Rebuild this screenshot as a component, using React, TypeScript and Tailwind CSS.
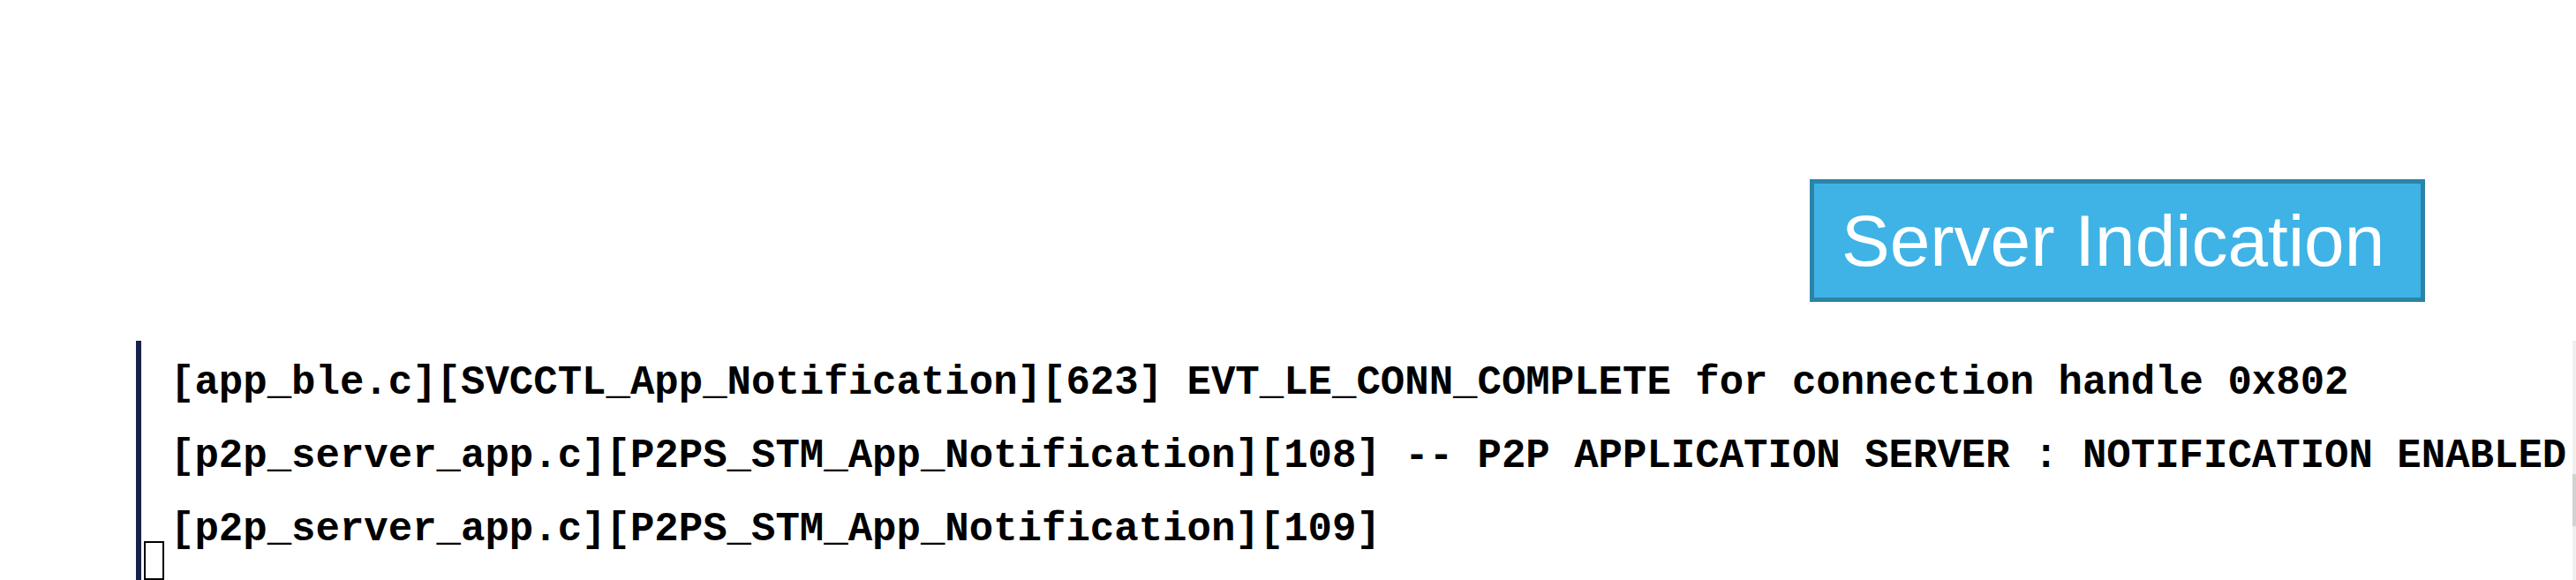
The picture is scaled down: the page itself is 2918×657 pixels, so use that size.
import React from "react";

const logLines = [
  "[app_ble.c][SVCCTL_App_Notification][623] EVT_LE_CONN_COMPLETE for connection handle 0x802",
  "[p2p_server_app.c][P2PS_STM_App_Notification][108] -- P2P APPLICATION SERVER : NOTIFICATION ENABLED",
  "[p2p_server_app.c][P2PS_STM_App_Notification][109]",
];

export default function App() {
  return (
    <div className="w-[2918px] h-[657px] overflow-hidden bg-white flex flex-col">
      {/* callout */}
      <div className="h-[392px] flex justify-end items-start pt-[203px] pr-[171px]">
        <div className="w-[697px] h-[139px] border-[5px] border-[#2b84a8] bg-[#3fb3e6] flex items-center pl-[31px]">
          <span className="font-['Liberation_Sans',Arial,sans-serif] text-[82px] leading-none text-white whitespace-nowrap">
            Server Indication
          </span>
        </div>
      </div>

      {/* terminal */}
      <div className="flex-1 flex">
        <div className="w-[154px]" />
        <div className="w-[6px] bg-[#17224a]" />
        <div className="flex-1 flex flex-col pt-[7px] pl-[3px]">
          {logLines.map((line, i) => (
            <div
              key={i}
              className="ml-[30px] font-['Liberation_Mono',monospace] font-bold text-[45.7px] leading-[83px] text-black whitespace-pre"
            >
              {line}
            </div>
          ))}
          <div className="-mt-[29px] w-[23px] h-[44px] border-2 border-black shrink-0" />
        </div>
        {/* scrollbar */}
        <div className="w-[4px] bg-[#f0f0f0] flex flex-col">
          <div className="h-[151px]" />
          <div className="h-[59px] bg-[#d2d2d2]" />
        </div>
      </div>
    </div>
  );
}
